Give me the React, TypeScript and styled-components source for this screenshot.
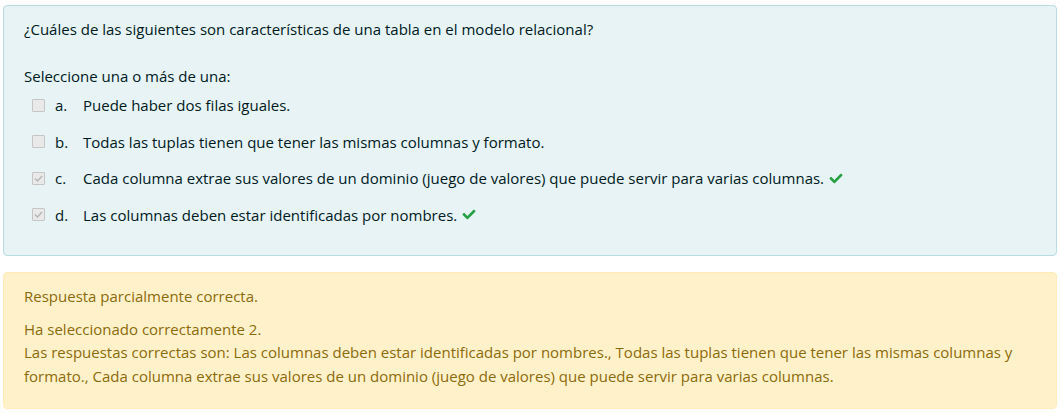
import React from "react";
import styled, { createGlobalStyle } from "styled-components";

const Global = createGlobalStyle`
  html, body { margin: 0; padding: 0; background: #fff; }
  body {
    font-family: "Open Sans", "Noto Sans", sans-serif;
    font-size: 15px;
    line-height: 22.5px;
  }
`;

const Page = styled.div`
  padding: 5px 3px 0 3px;
  display: flex;
  flex-direction: column;
  gap: 16px;
`;

const Formulation = styled.div`
  background: #e7f3f5;
  border: 1px solid #b8dce2;
  border-radius: 4px;
  color: #001a1e;
  padding: 12px 20px 22px 20px;
`;

const QText = styled.div`
  margin-bottom: 24px;
`;

const Prompt = styled.div``;

const Answer = styled.div`
  display: flex;
  flex-direction: column;
  padding-left: 8px;
`;

const Row = styled.div`
  display: flex;
  align-items: center;
  padding: 7px 0;
`;

const Box = styled.span<{ $checked?: boolean }>`
  width: 13px;
  height: 13px;
  box-sizing: border-box;
  border: 1px solid #c6c6c6;
  background: #e9e9e9;
  border-radius: 1px;
  margin-right: 10px;
  display: inline-flex;
  align-items: center;
  justify-content: center;
  flex-shrink: 0;
`;

const Num = styled.span`
  width: 28px;
  flex-shrink: 0;
`;

const Check = styled.svg`
  width: 14px;
  height: 13px;
  margin-left: 5px;
  fill: #28a046;
`;

const Outcome = styled.div`
  background: #fff2ca;
  border: 1px solid #ffecb8;
  border-radius: 4px;
  color: #8d6a09;
  padding: 12px 20px 20px 20px;
`;

const Feedback = styled.div`
  margin-bottom: 10px;
`;

const Line = styled.div`
  line-height: 23.5px;
`;

const options = [
  { l: "a.", t: "Puede haber dos filas iguales.", c: false },
  { l: "b.", t: "Todas las tuplas tienen que tener las mismas columnas y formato.", c: false },
  {
    l: "c.",
    t: "Cada columna extrae sus valores de un dominio (juego de valores) que puede servir para varias columnas.",
    c: true,
  },
  { l: "d.", t: "Las columnas deben estar identificadas por nombres.", c: true },
];

const BoxTick = () => (
  <svg width="11" height="11" viewBox="0 0 11 11">
    <path d="M2 5.5 L4.5 8 L9 3" fill="none" stroke="#b5b5b5" strokeWidth="1.3" />
  </svg>
);

const GreenCheck = () => (
  <Check viewBox="0 0 512 512">
    <path d="M173.9 439.4l-166.4-166.4c-10-10-10-26.2 0-36.2l36.2-36.2c10-10 26.2-10 36.2 0L192 312.7 432.1 72.6c10-10 26.2-10 36.2 0l36.2 36.2c10 10 10 26.2 0 36.2l-294.4 294.4c-10 10-26.2 10-36.2 0z" />
  </Check>
);

export default function App() {
  return (
    <>
      <Global />
      <Page>
        <Formulation>
          <QText>¿Cuáles de las siguientes son características de una tabla en el modelo relacional?</QText>
          <Prompt>Seleccione una o más de una:</Prompt>
          <Answer>
            {options.map((o) => (
              <Row key={o.l}>
                <Box $checked={o.c}>{o.c && <BoxTick />}</Box>
                <Num>{o.l}</Num>
                <span>{o.t}</span>
                {o.c && <GreenCheck />}
              </Row>
            ))}
          </Answer>
        </Formulation>
        <Outcome>
          <Feedback>Respuesta parcialmente correcta.</Feedback>
          <Line>Ha seleccionado correctamente 2.</Line>
          <Line>
            Las respuestas correctas son: Las columnas deben estar identificadas por nombres., Todas las tuplas
            tienen que tener las mismas columnas y formato., Cada columna extrae sus valores de un dominio (juego de
            valores) que puede servir para varias columnas.
          </Line>
        </Outcome>
      </Page>
    </>
  );
}
